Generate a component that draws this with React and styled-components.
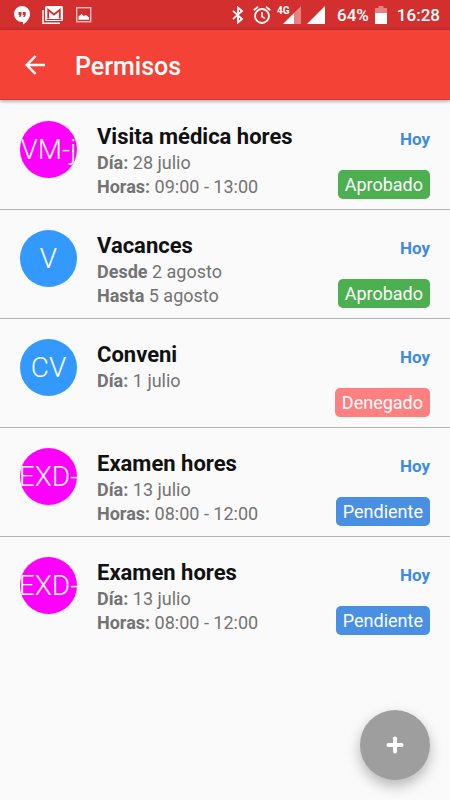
import styled, { createGlobalStyle } from "styled-components";

const permisos = [
    { id: 1, siglas: "VM-j", color: "#ff00ff", titulo: "Visita médica hores", lineas: [["Día:", "28 julio"], ["Horas:", "09:00 - 13:00"]], estado: "Aprobado" },
    { id: 2, siglas: "V", color: "#3399ff", titulo: "Vacances", lineas: [["Desde", "2 agosto"], ["Hasta", "5 agosto"]], estado: "Aprobado" },
    { id: 3, siglas: "CV", color: "#3399ff", titulo: "Conveni", lineas: [["Día:", "1 julio"]], estado: "Denegado" },
    { id: 4, siglas: "EXD-", color: "#ff00ff", titulo: "Examen hores", lineas: [["Día:", "13 julio"], ["Horas:", "08:00 - 12:00"]], estado: "Pendiente" },
    { id: 5, siglas: "EXD-", color: "#ff00ff", titulo: "Examen hores", lineas: [["Día:", "13 julio"], ["Horas:", "08:00 - 12:00"]], estado: "Pendiente" },
];

const colores = {
    Aprobado: "#4caf50",
    Denegado: "#ff8080",
    Pendiente: "#4a90e2",
};

export default function App(){
    return(
        <>
        <GlobalStyle/>
        <BarraEstado>
            <Notificaciones>
                <svg width="16" height="19" viewBox="0 0 16 19" aria-hidden="true">
                    <path fill="#fff" d="M8 0a8 8 0 0 1 8 8c0 4.500-3.500 8.500-7 10.500V16H8A8 8 0 0 1 8 0z"/>
                    <path fill="#d32f2f" d="M4.500 6h3v3.200L6.300 11H5l.8-2H4.500zM8.700 6h3v3.200L10.500 11H9.200l.8-2H8.700z"/>
                </svg>
                <svg width="22" height="19" viewBox="0 0 22 19" aria-hidden="true">
                    <path fill="none" stroke="#fff" strokeWidth="1.500" d="M1 4v13.200h17"/>
                    <rect x="3" y="0" width="18" height="15" rx="1.500" fill="#fff"/>
                    <path fill="none" stroke="#d32f2f" strokeWidth="1.800" d="M6.200 12.500V3.800l5.800 4.700 5.800-4.700v8.700"/>
                    <path stroke="#d32f2f" strokeWidth="1" d="M4.500 13.500h15"/>
                </svg>
                <svg width="16" height="16" viewBox="0 0 16 16" aria-hidden="true">
                    <rect x=".7" y=".7" width="14" height="14" fill="none" stroke="#f3c0c0" strokeWidth="1.400"/>
                    <path fill="#fff" d="M2.500 12.700V9.500L5.500 7l2.200 2L10 8l3 2.500v2.200z"/>
                </svg>
            </Notificaciones>
            <Sistema>
                <svg width="16" height="18" viewBox="0 0 16 18" aria-hidden="true">
                    <path fill="none" stroke="#fff" strokeWidth="1.800" d="M2 4.800l9 8.200-4 3.500v-15L11 5l-9 8.200"/>
                </svg>
                <svg width="18" height="18" viewBox="0 0 18 18" aria-hidden="true">
                    <circle cx="9" cy="10" r="7" fill="none" stroke="#fff" strokeWidth="1.800"/>
                    <path fill="none" stroke="#fff" strokeWidth="1.500" d="M9 6v4.500l3 2"/>
                    <path stroke="#fff" strokeWidth="1.800" d="M.8 4.200L5 .8M17.200 4.200L13 .8"/>
                </svg>
                <Movil>
                    <small>4G</small>
                    <svg width="18" height="18" viewBox="0 0 18 18" aria-hidden="true">
                        <path fill="#e58282" d="M11 7l7-7v18h-7z"/>
                        <path fill="#fff" d="M0 18L11 7v11z"/>
                    </svg>
                </Movil>
                <svg width="18" height="18" viewBox="0 0 18 18" aria-hidden="true">
                    <path fill="#fff" d="M0 18L18 0v18z"/>
                </svg>
                <Bateria>64%</Bateria>
                <svg width="12" height="18" viewBox="0 0 12 18" aria-hidden="true">
                    <path fill="#e58282" d="M0 2h3.500V0h5v2H12v6H0z"/>
                    <path fill="#fff" d="M0 7h12v11H0z"/>
                </svg>
                <Hora>16:28</Hora>
            </Sistema>
        </BarraEstado>
        <Header>
            <BotonVolver type="button" aria-label="Volver">
                <svg width="20" height="20" viewBox="0 0 20 20" aria-hidden="true">
                    <path fill="none" stroke="#fff" strokeWidth="2.500" d="M20 10H2M10.600 1L1.800 10l8.800 9"/>
                </svg>
            </BotonVolver>
            <h1>Permisos</h1>
        </Header>
        <Lista>
            {permisos.map((p) => (
                <Item key={p.id}>
                    <Avatar $color={p.color}><span>{p.siglas}</span></Avatar>
                    <Datos>
                        <h2>{p.titulo}</h2>
                        {p.lineas.map(([nombre, valor]) => (
                            <p key={nombre}><b>{nombre}</b> {valor}</p>
                        ))}
                    </Datos>
                    <Lateral>
                        <Fecha>Hoy</Fecha>
                        <Estado $color={colores[p.estado]}>{p.estado}</Estado>
                    </Lateral>
                </Item>
            ))}
        </Lista>
        <BotonNuevo type="button" aria-label="Nuevo permiso">
            <svg width="18" height="18" viewBox="0 0 18 18" aria-hidden="true">
                <path stroke="#fff" strokeWidth="4" strokeLinecap="round" d="M9 2.500v13M2.500 9h13"/>
            </svg>
        </BotonNuevo>
        </>
    )
}

const GlobalStyle = createGlobalStyle`
*{
    box-sizing:border-box;
}
body{
    margin:0;
    background-color:#fafafa;
    font-family:Roboto, sans-serif;
}
h1, h2, p, ul{
    margin:0;
    padding:0;
}
button{
    border:none;
    padding:0;
    display:flex;
    align-items:center;
    justify-content:center;
    cursor:pointer;
}
svg{
    display:block;
    flex-shrink:0;
}
`

const BarraEstado = styled.div`
display:flex;
justify-content:space-between;
align-items:center;
height:30px;
padding:0 10px 0 14px;
background-color:#d32f2f;
color:#fff;
`

const Notificaciones = styled.div`
display:flex;
align-items:center;
gap:12px;
`

const Sistema = styled.div`
display:flex;
align-items:center;
gap:6px;
font-size:17px;
font-weight:500;
`

const Movil = styled.div`
position:relative;
padding-left:6px;
small{
    position:absolute;
    top:0;
    left:0;
    font-size:10px;
    line-height:10px;
    font-weight:700;
}
`

const Bateria = styled.span`
margin-left:6px;
`

const Hora = styled.span`
margin-left:4px;
`

const Header = styled.header`
display:flex;
align-items:center;
height:70px;
padding:0 25px;
gap:30px;
background-color:#f44336;
border-bottom:1px solid #d93a2f;
box-shadow:0 1px 4px rgba(0,0,0,0.4);
color:#fff;
h1{
    padding-top:4px;
    font-size:25px;
    line-height:30px;
    font-weight:500;
}
`

const BotonVolver = styled.button`
width:20px;
height:40px;
background:none;
`

const Lista = styled.ul`
list-style:none;
padding-top:1px;
`

const Item = styled.li`
display:flex;
min-height:109px;
padding:19px 20px 10px;
gap:20px;
border-bottom:1px solid #b4b4b4;
&:last-child{
    border-bottom-color:transparent;
}
`

const Avatar = styled.div`
display:flex;
align-items:center;
justify-content:center;
flex-shrink:0;
width:57px;
height:57px;
margin-top:1px;
border-radius:50%;
overflow:hidden;
background-color:${(props) => props.$color};
color:#fff;
font-size:28px;
font-weight:300;
white-space:nowrap;
`

const Datos = styled.div`
flex:1;
min-width:0;
padding-top:3px;
h2{
    font-size:22px;
    line-height:28px;
    font-weight:700;
    color:#111;
}
p{
    font-size:18px;
    line-height:24px;
    color:#737373;
}
b{
    font-weight:700;
}
`

const Lateral = styled.div`
display:flex;
flex-direction:column;
align-items:flex-end;
justify-content:space-between;
padding-top:7px;
`

const Fecha = styled.span`
font-size:17px;
line-height:24px;
font-weight:700;
color:#3d8be0;
`

const Estado = styled.span`
padding:0 7px;
border-radius:5px;
font-size:18px;
line-height:29px;
color:#fff;
background-color:${(props) => props.$color};
`

const BotonNuevo = styled.button`
position:fixed;
right:20px;
bottom:20px;
width:70px;
height:70px;
border-radius:50%;
background-color:#9e9e9e;
box-shadow:0 6px 14px rgba(0,0,0,0.28);
`
